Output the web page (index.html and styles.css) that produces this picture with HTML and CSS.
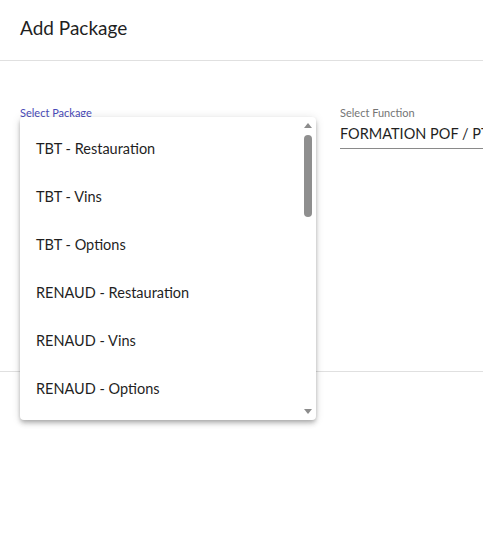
FILE: index.html
```html
<!DOCTYPE html>
<html lang="fr">
<head>
<meta charset="utf-8">
<title>Add Package</title>
<link rel="stylesheet" href="styles.css">
</head>
<body>
<div class="dialog">
  <header class="dialog-header">
    <h1 class="dialog-title">Add Package</h1>
  </header>
  <section class="dialog-body">
    <div class="field field-package">
      <label class="field-label focused">Select Package</label>
      <div class="field-value"></div>
    </div>
    <div class="field field-function">
      <label class="field-label">Select Function</label>
      <div class="field-value">FORMATION POF / PTF</div>
    </div>
  </section>
  <footer class="dialog-footer"></footer>
</div>

<div class="select-panel">
  <ul class="options">
    <li class="option">TBT - Restauration</li>
    <li class="option">TBT - Vins</li>
    <li class="option">TBT - Options</li>
    <li class="option">RENAUD - Restauration</li>
    <li class="option">RENAUD - Vins</li>
    <li class="option">RENAUD - Options</li>
  </ul>
  <div class="scrollbar">
    <span class="arrow arrow-up"></span>
    <span class="thumb"></span>
    <span class="arrow arrow-down"></span>
  </div>
</div>
</body>
</html>
```

FILE: styles.css
```css
html, body {
  margin: 0;
  padding: 0;
  background: #fff;
  font-family: "Lato", "Noto Sans", sans-serif;
  color: #212121;
  overflow: hidden;
}

.dialog {
  width: 483px;
  height: 558px;
}

.dialog-header {
  height: 61px;
  padding: 0 20px;
  display: flex;
  align-items: center;
  border-bottom: 1px solid #e0e0e0;
  box-sizing: border-box;
}

.dialog-title {
  margin: 0;
  font-size: 19px;
  font-weight: 400;
  color: #1f1f1f;
  padding-bottom: 6px;
}

.dialog-body {
  display: flex;
  gap: 24px;
  padding: 45px 0 0 20px;
  height: 311px;
  box-sizing: border-box;
  border-bottom: 1px solid #e0e0e0;
}

.field {
  display: flex;
  flex-direction: column;
}

.field-package {
  width: 296px;
}

.field-function {
  flex: 1;
  overflow: hidden;
}

.field-label {
  font-size: 11px;
  line-height: 14px;
  color: #757575;
}

.field-label.focused {
  color: #4a4ab8;
}

.field-value {
  font-size: 14.5px;
  line-height: 20px;
  height: 20px;
  padding: 4px 0 4px;
  border-bottom: 1px solid #8a8a8a;
  white-space: nowrap;
  color: #1f1f1f;
}

.select-panel {
  position: absolute;
  left: 20px;
  top: 117px;
  width: 296px;
  height: 303px;
  background: #fff;
  border-radius: 4px;
  box-shadow: 0 2px 4px -1px rgba(0,0,0,.2), 0 4px 5px 0 rgba(0,0,0,.14), 0 1px 10px 0 rgba(0,0,0,.12);
  overflow: hidden;
}

.options {
  list-style: none;
  margin: 0;
  padding: 7px 0 0;
}

.option {
  height: 48px;
  display: flex;
  align-items: center;
  padding-left: 16px;
  font-size: 14.5px;
  color: #1f1f1f;
}

.scrollbar {
  position: absolute;
  top: 0;
  right: 0;
  width: 16px;
  height: 100%;
}

.arrow {
  position: absolute;
  left: 4px;
  width: 0;
  height: 0;
  border-left: 4px solid transparent;
  border-right: 4px solid transparent;
}

.arrow-up {
  top: 6px;
  border-bottom: 5px solid #8c8c8c;
}

.arrow-down {
  bottom: 6px;
  border-top: 5px solid #8c8c8c;
}

.thumb {
  position: absolute;
  left: 4px;
  top: 18px;
  width: 8px;
  height: 82px;
  border-radius: 4px;
  background: #8f8f8f;
}
```
